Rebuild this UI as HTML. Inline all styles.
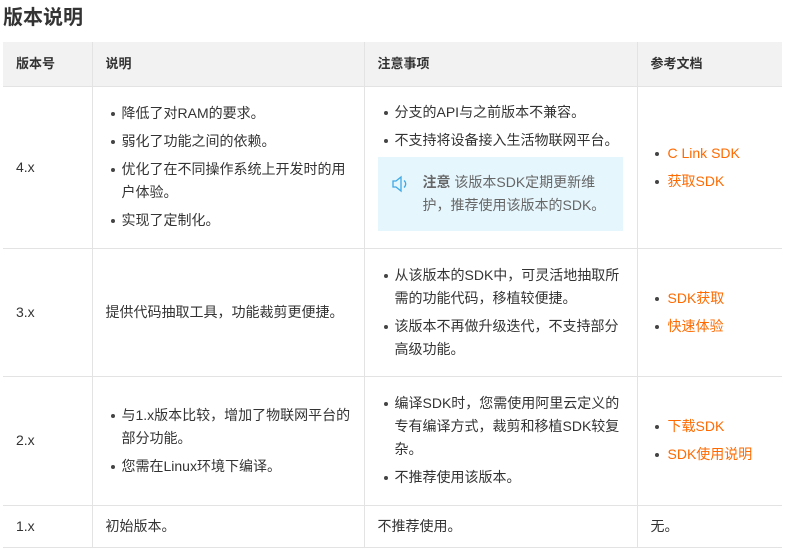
<!DOCTYPE html>
<html><head><meta charset="utf-8"><style>
*{margin:0;padding:0;box-sizing:border-box}
body{width:786px;height:550px;background:#fff;font-family:"Liberation Sans","Noto Sans CJK SC",sans-serif;color:#333;font-size:14px;overflow:hidden;position:relative}
h2{position:absolute;left:3px;top:5px;font-size:20px;font-weight:bold;color:#333;line-height:26px}
table{position:absolute;left:3px;top:42px;border-collapse:collapse;table-layout:fixed;width:779px}
td,th{border:1px solid #e3e3e3;vertical-align:middle;padding:0 12px 0 13px;text-align:left;line-height:23px}
th{background:#f2f2f2;font-weight:bold;height:44px;border-top:none;font-size:13px}
tr td:first-child,tr th:first-child{border-left:none}
tr td:last-child,tr th:last-child{border-right:none}
ul{list-style:none}
li{position:relative;padding-left:16px;margin:5px 0}
li:before{content:"";position:absolute;left:5px;top:10px;width:4px;height:4px;border-radius:50%;background:#444}
td:nth-child(3) li{padding-left:17px}
td:nth-child(3) li:before{left:6px}
td:nth-child(4) li{padding-left:17px}
td:nth-child(4) li:before{left:4px}
a{color:#ff6a00;text-decoration:none}
.note{background:#e5f6fd;margin:4px 0 8px 0;padding:14px 14px 14px 45px;position:relative;color:#666;line-height:23px;width:245px;font-size:14px}
.note svg{position:absolute;left:14px;top:18px}
</style></head><body>
<h2>版本说明</h2>
<table>
<colgroup><col style="width:89px"><col style="width:272px"><col style="width:273px"><col style="width:145px"></colgroup>
<tr><th>版本号</th><th>说明</th><th>注意事项</th><th>参考文档</th></tr>
<tr style="height:162px"><td>4.x</td><td><ul><li>降低了对RAM的要求。</li><li>弱化了功能之间的依赖。</li><li>优化了在不同操作系统上开发时的用户体验。</li><li>实现了定制化。</li></ul></td>
<td><ul><li>分支的API与之前版本不兼容。</li><li>不支持将设备接入生活物联网平台。</li></ul>
<div class="note"><svg width="18" height="18" viewBox="0 0 18 18" fill="none" stroke="#3fa9e6" stroke-width="1.3"><path d="M1 6h3l5-4v14l-5-4H1z"/><path d="M12 5.5a4.5 4.5 0 0 1 0 7"/></svg><b>注意</b> 该版本SDK定期更新维护，推荐使用该版本的SDK。</div></td>
<td><ul><li><a>C Link SDK</a></li><li><a>获取SDK</a></li></ul></td></tr>
<tr style="height:128px"><td>3.x</td><td>提供代码抽取工具，功能裁剪更便捷。</td><td><ul><li>从该版本的SDK中，可灵活地抽取所需的功能代码，移植较便捷。</li><li>该版本不再做升级迭代，不支持部分高级功能。</li></ul></td><td><ul><li><a>SDK获取</a></li><li><a>快速体验</a></li></ul></td></tr>
<tr style="height:129px"><td>2.x</td><td><ul><li>与1.x版本比较，增加了物联网平台的部分功能。</li><li>您需在Linux环境下编译。</li></ul></td><td><ul><li>编译SDK时，您需使用阿里云定义的专有编译方式，裁剪和移植SDK较复杂。</li><li>不推荐使用该版本。</li></ul></td><td><ul><li><a>下载SDK</a></li><li><a>SDK使用说明</a></li></ul></td></tr>
<tr style="height:42px"><td>1.x</td><td>初始版本。</td><td>不推荐使用。</td><td>无。</td></tr>
</table>
</body></html>
